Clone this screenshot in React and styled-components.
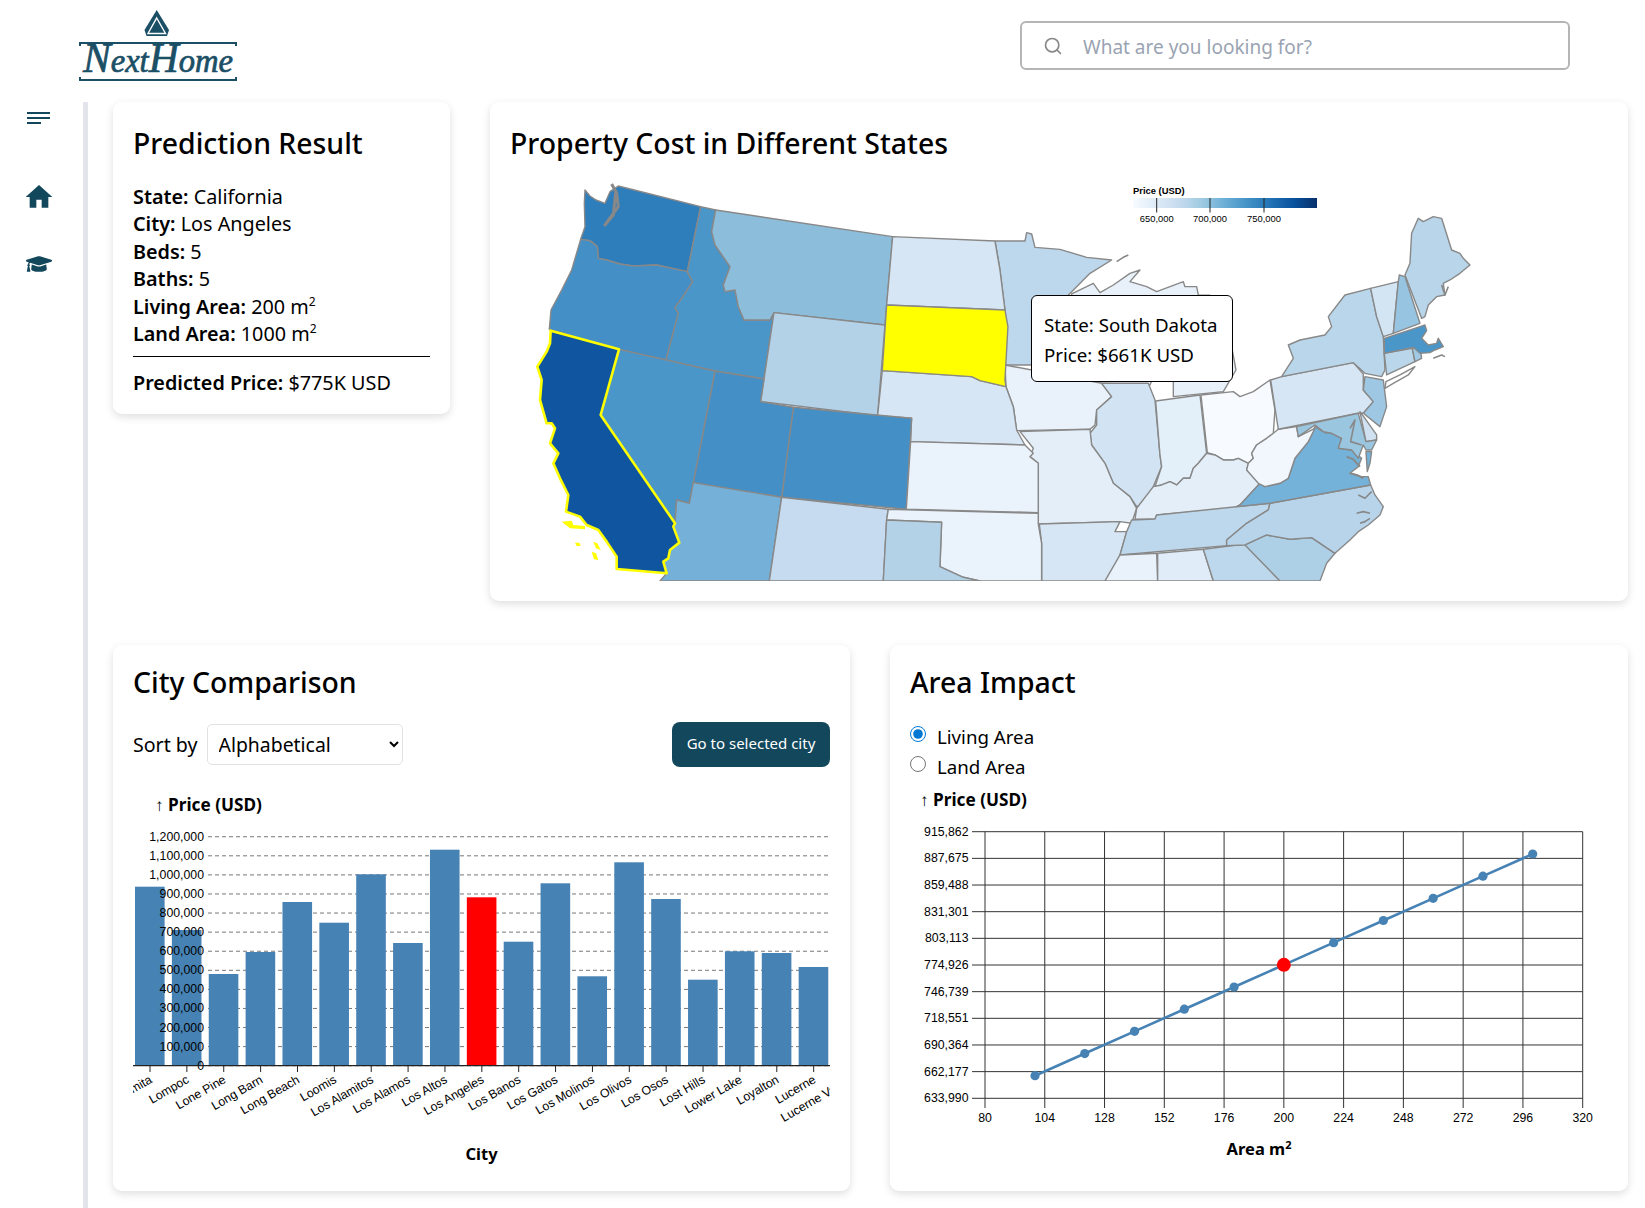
import React from "react";
import styled, { createGlobalStyle } from "styled-components";
import { MdHome } from "react-icons/md";
import { FaGraduationCap } from "react-icons/fa";
import { FiSearch } from "react-icons/fi";

const GlobalStyle = createGlobalStyle`
  html, body {
    margin: 0;
    padding: 0;
    background: #fff;
    color: #000;
    font-family: "Noto Sans", "Open Sans", sans-serif;
  }
`;

const Page = styled.div`
  width: 1645px;
  height: 1208px;
  overflow: hidden;
  display: flex;
  flex-direction: column;
`;

const Header = styled.header`
  height: 102px;
  box-sizing: border-box;
  padding: 10px 75px 0 78px;
  display: flex;
  justify-content: space-between;
  align-items: flex-start;
`;

const SearchBox = styled.div`
  width: 550px;
  height: 49px;
  margin-top: 11px;
  box-sizing: border-box;
  border: 2px solid #b5b5b5;
  border-radius: 6px;
  display: flex;
  align-items: center;
  padding-left: 21px;
  gap: 20px;
  color: #888;
`;

const SearchInput = styled.input`
  flex: 1;
  border: none;
  outline: none;
  background: transparent;
  padding: 2px 0 0;
  font-family: inherit;
  font-size: 19px;
  &::placeholder {
    color: #9aa3b2;
    opacity: 1;
  }
`;

const Main = styled.div`
  flex: 1;
  display: flex;
  min-height: 0;
`;

const Sidebar = styled.nav`
  width: 88px;
  box-sizing: border-box;
  border-right: 5px solid #e4e4ec;
  padding: 10px 6px 0 0;
  display: flex;
  flex-direction: column;
  align-items: center;
  color: #12475c;
`;

const NavIcon = styled.div`
  display: flex;
  margin-top: ${({ $top }) => $top}px;
`;

const Content = styled.main`
  flex: 1;
  padding: 0 17px 0 25px;
  display: flex;
  flex-direction: column;
  gap: 44px;
`;

const Row = styled.div`
  display: flex;
  gap: 40px;
  align-items: flex-start;
`;

const Card = styled.section`
  box-sizing: border-box;
  width: ${({ $width }) => $width}px;
  padding: ${({ $top }) => $top}px 20px ${({ $bottom }) => $bottom}px;
  background: #fff;
  border-radius: 9px;
  box-shadow: 0 3px 9px rgba(0, 0, 0, 0.13);
`;

const Title = styled.h2`
  margin: 0 0 ${({ $gap }) => $gap}px;
  font-size: 28.4px;
  line-height: 38px;
  font-weight: 500;
`;

const Fact = styled.div`
  font-size: 19.8px;
  line-height: 27.4px;
  sup {
    font-size: 12px;
    line-height: 0;
  }
  b {
    font-weight: 600;
  }
`;

const Rule = styled.hr`
  margin: 9px 0 12px;
  border: none;
  border-top: 1px solid #000;
`;

const MapFrame = styled.div`
  position: relative;
  margin: 0 -20px;
  height: 411px;
`;

const Tooltip = styled.div`
  position: absolute;
  left: 541px;
  top: 125px;
  width: 202px;
  height: 87px;
  box-sizing: border-box;
  padding: 14px 12px;
  background: #fff;
  border: 1px solid #000;
  border-radius: 6px;
  font-size: 18.7px;
  line-height: 29.5px;
  white-space: nowrap;
`;

const Controls = styled.div`
  height: 45px;
  margin-top: 21px;
  display: flex;
  align-items: center;
  justify-content: space-between;
`;

const SortGroup = styled.label`
  display: flex;
  align-items: center;
  gap: 9px;
  font-size: 19.6px;
`;

const SortSelect = styled.select`
  width: 196px;
  height: 41px;
  padding-left: 7px;
  background: #fff;
  border: 1px solid #e2e2e2;
  border-radius: 5px;
  font-family: inherit;
  font-size: 19.4px;
  color: #000;
`;

const GoButton = styled.button`
  width: 158px;
  height: 45px;
  padding: 0 0 3px;
  border: none;
  border-radius: 8px;
  background: #12475c;
  color: #fff;
  font-family: inherit;
  font-size: 15px;
`;

const ChartSvg = styled.svg`
  display: block;
`;

const RadioList = styled.div`
  margin-top: 20px;
  display: flex;
  flex-direction: column;
`;

const RadioLabel = styled.label`
  height: 30px;
  display: flex;
  align-items: center;
  gap: 10px;
  font-size: 18.7px;
`;

const Radio = styled.input`
  width: 16px;
  height: 16px;
  margin: 0 1px 4px 0;
  accent-color: #0078d4;
`;

const Land = styled.polygon`
  stroke: ${({ $edge }) => $edge || "#888"};
  stroke-width: ${({ $edge }) => ($edge ? 2.6 : 1.4)}px;
  stroke-linejoin: round;
  vector-effect: non-scaling-stroke;
`;

const Shoreline = styled.polyline`
  fill: none;
  stroke: #888;
  stroke-width: ${({ $weight }) => $weight || 1.4}px;
  stroke-linejoin: round;
  vector-effect: non-scaling-stroke;
`;

const AxisText = styled.text`
  font-family: "Liberation Sans", Arial, sans-serif;
  font-size: 12.3px;
  fill: #000;
`;

const LegendText = styled.text`
  font-family: "Liberation Sans", Arial, sans-serif;
  font-size: 9.4px;
  font-weight: ${({ $bold }) => ($bold ? 700 : 400)};
  fill: #000;
`;

const AxisTitle = styled.text`
  font-family: "Noto Sans", sans-serif;
  font-size: ${({ $size }) => $size}px;
  font-weight: 700;
  fill: #000;
`;

const westStates = [
  ["#2e7ebc", "285,60 300,78 318,90 345,100 360,65 385,48 632,110 592,305 500,285 430,288 390,282 350,270 325,265 322,230 300,212 272,208 285,170 283,100"],
  ["#4490c6", "272,208 300,212 322,230 325,265 350,270 390,282 430,288 500,285 592,305 608,335 575,385 555,412 565,430 528,570 387,538 178,478 183,420 215,360 245,300"],
  ["#4a96c9", "632,110 677,120 665,185 675,225 720,290 700,345 705,365 735,360 745,410 762,450 840,450 852,428 822,627 675,603 528,570 565,430 555,412 575,385 608,335 592,305"],
  ["#8cbddb", "677,120 1208,200 1185,465 852,428 840,450 762,450 745,410 735,360 705,365 700,345 720,290 675,225 665,185"],
  ["#b3d2e8", "852,428 1185,465 1163,737 812,695"],
  ["#d6e6f4", "1208,200 1515,213 1530,300 1545,420 1190,405"],
  ["#d7e6f4", "1177,602 1445,620 1470,632 1548,650 1570,710 1580,780 1605,825 1262,815 1265,745 1163,737"],
  ["#4490c6", "910,712 1265,745 1249,1018 875,982"],
  ["#4490c6", "675,603 822,627 812,695 910,712 875,982 610,938"],
  ["#4a96c9", "387,538 675,603 610,938 598,1000 560,990 555,1060 332,735"],
  ["#74b0d7", "610,938 875,982 838,1233 510,1233 530,1210 520,1175 535,1165 540,1140 568,1118 550,1070 555,1060 560,990 598,1000"],
  ["#c6dbef", "875,982 1195,1018 1190,1050 1180,1233 838,1233"],
  ["#eaf2fb", "1262,815 1605,825 1630,850 1620,860 1645,880 1645,1028 1249,1018"],
  ["#eaf2fb", "1195,1018 1645,1030 1645,1062 1655,1120 1655,1233 1470,1233 1420,1222 1350,1190 1355,1057 1190,1050"],
  ["#b3d2e8", "1190,1050 1355,1057 1350,1190 1420,1222 1470,1233 1180,1233"],
];

const southDakota = "1190,405 1545,420 1554,470 1545,630 1548,650 1470,632 1445,620 1177,602";

const california = "182,482 387,538 332,735 555,1060 550,1070 568,1118 540,1140 535,1165 520,1175 530,1210 380,1197 380,1160 350,1115 325,1080 290,1065 270,1040 228,1025 235,975 210,925 190,880 205,850 180,820 195,775 185,760 170,760 150,690 155,630 142,590 170,545 180,520";

const channelIslands = [
  "215,1055 245,1052 250,1065 285,1068 285,1078 240,1075",
  "255,1118 268,1118 272,1128 260,1128",
  "310,1115 322,1120 332,1140 318,1135",
  "305,1145 318,1150 325,1170 312,1168",
];

const eastStates = [
  ["#e8f1fa", "155,420 600,420 510,645 365,640 155,585"],
  ["#bdd7ec", "45,213 135,213 140,188 155,192 165,232 240,238 320,262 395,270 330,310 275,365 260,380 155,450 155,585 75,585 78,470 75,420 60,300"],
  ["#e8f1fa", "275,372 340,340 360,368 400,345 450,310 480,300 450,335 500,350 530,365 610,335 615,350 650,350 655,375 690,376 690,420 275,420"],
  ["#e8f1fa", "580,680 730,665 768,600 755,530 580,530"],
  ["#e9f2fb", "75,585 365,640 395,680 350,720 345,765 330,778 110,782 100,710 78,650"],
  ["#d2e4f3", "365,640 505,640 525,690 540,855 545,890 520,950 495,1000 470,1010 450,980 400,940 375,880 335,825 330,790 350,765 350,720 395,680"],
  ["#e3eff9", "527,693 660,675 680,850 655,880 640,895 630,925 610,925 590,945 570,935 545,945 525,950 545,890 540,855"],
  ["#f7fbff", "663,675 760,665 780,680 820,665 870,630 885,720 880,790 860,805 830,825 815,850 820,865 805,880 775,865 760,870 730,870 705,855 682,848"],
  ["#e3eef9", "120,785 330,778 335,825 375,880 400,940 450,980 470,1015 455,1060 420,1055 175,1062 175,880 150,860 160,835"],
  ["#d7e6f5", "178,1062 420,1055 405,1085 440,1085 420,1155 385,1233 185,1233 185,1120"],
  ["#e3eef9", "470,1015 520,950 545,945 570,935 590,945 610,925 630,925 640,895 655,880 680,850 705,855 730,870 760,870 775,865 805,880 800,900 840,940 780,1005 760,1015 530,1035 525,1047 465,1048"],
  ["#bdd7ec", "455,1050 525,1047 530,1035 870,1000 865,1020 800,1060 740,1110 740,1127 420,1155 440,1085"],
  ["#e9f2fb", "420,1155 530,1150 533,1233 375,1233"],
  ["#e0ecf8", "533,1150 670,1138 700,1233 533,1233"],
  ["#bdd7ec", "670,1138 795,1122 900,1233 700,1233"],
  ["#add0e6", "795,1125 860,1095 930,1108 995,1103 1065,1150 1040,1180 1020,1233 900,1233"],
  ["#b7d4ea", "870,1000 1172,945 1185,975 1210,1010 1200,1035 1165,1065 1135,1085 1110,1110 1065,1150 995,1103 930,1108 860,1095 795,1125 740,1127 740,1110 800,1060 865,1020"],
  ["#74b2d9", "780,1005 840,940 855,950 900,940 925,925 945,865 985,815 1005,770 1030,785 1055,790 1085,805 1075,835 1115,840 1145,865 1135,890 1110,910 1145,920 1165,920 1172,945 870,1000 770,1010"],
  ["#74b2d9", "1158,845 1175,845 1170,880 1162,905"],
  ["#f2f7fd", "805,880 820,865 815,850 830,825 860,805 880,790 895,778 950,770 955,800 1005,775 985,815 945,865 925,925 900,940 855,950 835,940 800,900"],
  ["#ffffff", "1005,765 1035,775 1040,790 1015,775"],
  ["#d6e6f4", "872,630 905,620 1120,578 1150,612 1150,660 1180,695 1150,730 1135,730 895,778"],
  ["#bad6eb", "905,620 940,565 925,525 960,510 1035,495 1055,470 1045,440 1095,375 1172,355 1190,440 1210,500 1215,600 1205,620 1155,610 1120,578"],
  ["#d3e4f3", "1172,355 1255,335 1240,490 1210,500 1190,440"],
  ["#96c4e1", "1258,315 1275,320 1320,460 1240,490 1255,335"],
  ["#b9d5ea", "1275,315 1290,280 1295,190 1315,145 1330,155 1360,140 1385,145 1415,240 1440,250 1450,265 1470,285 1440,310 1410,330 1390,340 1395,375 1370,380 1345,405 1335,440 1325,445"],
  ["#bad6eb", "1213,550 1297,535 1305,575 1220,615"],
  ["#9fc9e4", "1297,535 1320,530 1325,565 1305,575"],
  ["#4a96c9", "1213,505 1320,470 1335,465 1340,482 1325,505 1345,525 1370,520 1375,505 1390,530 1365,540 1350,548 1320,550 1300,532 1213,550"],
  ["#ffffff", "1218,635 1260,615 1305,590 1285,615 1240,640 1215,655"],
  ["#9dc7e2", "1155,620 1210,630 1220,710 1200,770 1150,730 1180,695 1150,660"],
  ["#d0e2f2", "1140,725 1155,745 1190,795 1190,810 1158,815"],
  ["#9ac6e0", "950,770 1135,730 1158,815 1190,810 1175,840 1158,840 1150,825 1135,865 1115,840 1075,835 1085,805 1055,790 1030,785 1005,765 955,800"],
];

const shorelines = [
  ["1110,775 1125,750 1112,815 1145,825", 1.6],
  ["1100,860 1120,868 1140,890", 2],
  ["1110,910 1130,915 1150,925", 2],
  ["1135,975 1155,985 1175,965", 1.6],
  ["1130,1030 1150,1025 1170,1030", 1.6],
  ["1140,1060 1155,1055 1170,1045", 1.6],
  ["410,275 430,262 445,255", 1.6],
  ["1385,345 1395,375 1405,350", 1.6],
  ["1360,565 1385,555 1395,560", 1.6],
];

const MapDrawing = () => (
  <ChartSvg width="1138" height="411" viewBox="490 170 1138 411">
    <defs>
      <linearGradient id="blues">
        {["#f7fbff", "#deebf7", "#c6dbef", "#9ecae1", "#6baed6", "#4292c6", "#2171b5", "#08519c", "#08306b"].map((c, i) => (
          <stop key={c} offset={`${i * 12.5}%`} stopColor={c} />
        ))}
      </linearGradient>
    </defs>
    <g transform="translate(980 170) scale(0.3333)">
      {eastStates.map(([fill, points]) => (
        <Land key={points} points={points} fill={fill} />
      ))}
      {shorelines.map(([points, weight]) => (
        <Shoreline key={points} points={points} $weight={weight} />
      ))}
    </g>
    <g transform="translate(490 170) scale(0.3333)">
      {westStates.map(([fill, points]) => (
        <Land key={points} points={points} fill={fill} />
      ))}
      <Land points={southDakota} fill="#ffff00" />
      <Shoreline points="365,42 380,70 385,110 345,165 370,135 378,60" $weight={3} />
      <Land points={california} fill="#10559f" $edge="#ffff00" />
      {channelIslands.map((points) => (
        <polygon key={points} points={points} fill="#ffff00" />
      ))}
    </g>
    <LegendText x="1133" y="193.5" $bold>Price (USD)</LegendText>
    <rect x="1133" y="198" width="184" height="10" fill="url(#blues)" />
    {[[1156.7, "650,000"], [1210, "700,000"], [1264, "750,000"]].map(([x, label]) => (
      <g key={label}>
        <line x1={x} x2={x} y1="198" y2="212.5" stroke="#222" />
        <LegendText x={x} y="221.5" textAnchor="middle">{label}</LegendText>
      </g>
    ))}
  </ChartSvg>
);

const cityBars = [
  ["Lomita", 886.7], ["Lompoc", 930], ["Lone Pine", 974], ["Long Barn", 952], ["Long Beach", 902],
  ["Loomis", 922.7], ["Los Alamitos", 874.3], ["Los Alamos", 943], ["Los Altos", 849.7], ["Los Angeles", 897.3],
  ["Los Banos", 941.7], ["Los Gatos", 883.3], ["Los Molinos", 976.3], ["Los Olivos", 862.3], ["Los Osos", 899],
  ["Lost Hills", 979.7], ["Lower Lake", 951.3], ["Loyalton", 953], ["Lucerne", 967],
];

const priceTicks = [...Array(13).keys()].map((i) => i * 100000);

const CityChart = () => (
  <ChartSvg width="697" height="415" viewBox="133 767 697 415">
    <AxisTitle x="155" y="811" $size={17.2}>↑ Price (USD)</AxisTitle>
    {priceTicks.map((price, i) => (
      <line key={price} x1="208" x2="828" y1={1065.7 - i * 19.08} y2={1065.7 - i * 19.08} stroke="#777" strokeDasharray="4 3" />
    ))}
    {cityBars.map(([city, top], i) => (
      <rect
        key={city}
        x={135 + i * 36.87}
        y={top}
        width="29.6"
        height={1065.7 - top}
        fill={city === "Los Angeles" ? "#ff0000" : "#4682b4"}
      />
    ))}
    {priceTicks.map((price, i) => (
      <AxisText key={price} x="204" y={1069.7 - i * 19.08} textAnchor="end">
        {price.toLocaleString("en-US")}
      </AxisText>
    ))}
    <line x1="133" x2="830" y1="1065.7" y2="1065.7" stroke="#222" strokeWidth="1.3" />
    {[...cityBars.map(([city]) => city), "Lucerne Valley"].map((city, i) => {
      const x = 150 + i * 36.87;
      return (
        <g key={city}>
          <line x1={x} x2={x} y1="1066" y2="1072" stroke="#222" />
          <AxisText x={x + 3} y="1082" textAnchor="end" transform={`rotate(-30 ${x + 3} 1082)`}>{city}</AxisText>
        </g>
      );
    })}
    <AxisTitle x="481.5" y="1160" textAnchor="middle" $size={16.5}>City</AxisTitle>
  </ChartSvg>
);

const priceLabels = ["915,862", "887,675", "859,488", "831,301", "803,113", "774,926", "746,739", "718,551", "690,364", "662,177", "633,990"];
const areaLabels = [80, 104, 128, 152, 176, 200, 224, 248, 272, 296, 320];
const samples = [...Array(11).keys()].map((i) => ({ area: 100 + i * 20, x: 1035 + i * 49.77, y: 1075.7 - i * 22.17 }));

const AreaChart = () => (
  <ChartSvg width="698" height="400" viewBox="910 781 698 400">
    <AxisTitle x="920" y="806" $size={17.2}>↑ Price (USD)</AxisTitle>
    {priceLabels.map((label, i) => {
      const y = 831.7 + i * 26.66;
      return (
        <g key={label}>
          <line x1="972" x2="1582.7" y1={y} y2={y} stroke="#333" />
          <AxisText x="968.5" y={y + 4} textAnchor="end">{label}</AxisText>
        </g>
      );
    })}
    {areaLabels.map((label, i) => {
      const x = 985 + i * 59.77;
      return (
        <g key={label}>
          <line x1={x} x2={x} y1="831.7" y2="1108" stroke="#333" />
          <AxisText x={x} y="1122" textAnchor="middle">{label}</AxisText>
        </g>
      );
    })}
    <polyline
      points={samples.map((p) => `${p.x},${p.y}`).join(" ")}
      fill="none"
      stroke="#4682b4"
      strokeWidth="2.6"
    />
    {samples.map((p) => (
      <circle key={p.area} cx={p.x} cy={p.y} r={p.area === 200 ? 7 : 4.6} fill={p.area === 200 ? "#ff0000" : "#4682b4"} />
    ))}
    <AxisTitle x="1259" y="1155" textAnchor="middle" $size={16.5}>
      Area m<tspan dy="-6" fontSize="11">2</tspan>
    </AxisTitle>
  </ChartSvg>
);

const Logo = () => (
  <svg width="160" height="74" viewBox="78 10 160 74">
    <path d="M156.7 10 L169 30 L167 36 L146.5 36 L144.5 30 Z" fill="#1b4f66" />
    <path d="M156.7 18 L165.5 33.5 L148 33.5 Z" fill="none" stroke="#fff" strokeWidth="1.4" />
    <path d="M156.7 24 L162 32 L151.5 32 Z" fill="#1b4f66" />
    <g fill="none" stroke="#1b4f66" strokeWidth="2">
      <path d="M80 46 V43 H236 V46" />
      <path d="M80 77 V80 H236 V77" />
    </g>
    <text
      x="83"
      y="72"
      textLength="150"
      lengthAdjust="spacingAndGlyphs"
      fontFamily="'Liberation Serif', serif"
      fontStyle="italic"
      fontSize="33"
      stroke="#1b4f66"
      strokeWidth="0.7"
      fill="#1b4f66"
    >
      <tspan fontSize="42">N</tspan>ext<tspan fontSize="42">H</tspan>ome
    </text>
  </svg>
);

const MenuIcon = () => (
  <svg width="23" height="14" viewBox="0 0 23 14">
    <rect width="23" height="2" fill="#12475c" />
    <rect y="5" width="23" height="2" fill="#12475c" />
    <rect y="10" width="14" height="2" fill="#12475c" />
  </svg>
);

const App = () => (
  <Page>
    <GlobalStyle />
    <Header>
      <Logo />
      <SearchBox>
        <FiSearch size={20} />
        <SearchInput placeholder="What are you looking for?" />
      </SearchBox>
    </Header>
    <Main>
      <Sidebar>
        <NavIcon $top={0}><MenuIcon /></NavIcon>
        <NavIcon $top={55}><MdHome size={32} /></NavIcon>
        <NavIcon $top={38}><FaGraduationCap size={26} /></NavIcon>
      </Sidebar>
      <Content>
        <Row>
          <Card $width={337} $top={22} $bottom={17}>
            <Title $gap={21}>Prediction Result</Title>
            <Fact><b>State:</b> California</Fact>
            <Fact><b>City:</b> Los Angeles</Fact>
            <Fact><b>Beds:</b> 5</Fact>
            <Fact><b>Baths:</b> 5</Fact>
            <Fact><b>Living Area:</b> 200 m<sup>2</sup></Fact>
            <Fact><b>Land Area:</b> 1000 m<sup>2</sup></Fact>
            <Rule />
            <Fact><b>Predicted Price:</b> $775K USD</Fact>
          </Card>
          <Card $width={1138} $top={22} $bottom={20}>
            <Title $gap={8}>Property Cost in Different States</Title>
            <MapFrame>
              <MapDrawing />
              <Tooltip>
                State: South Dakota<br />
                Price: $661K USD
              </Tooltip>
            </MapFrame>
          </Card>
        </Row>
        <Row>
          <Card $width={737} $top={18} $bottom={9}>
            <Title $gap={0}>City Comparison</Title>
            <Controls>
              <SortGroup>
                Sort by
                <SortSelect defaultValue="alpha">
                  <option value="alpha">Alphabetical</option>
                  <option value="price">Price</option>
                </SortSelect>
              </SortGroup>
              <GoButton>Go to selected city</GoButton>
            </Controls>
            <CityChart />
          </Card>
          <Card $width={738} $top={18} $bottom={10}>
            <Title $gap={0}>Area Impact</Title>
            <RadioList>
              <RadioLabel><Radio type="radio" name="area" defaultChecked /> Living Area</RadioLabel>
              <RadioLabel><Radio type="radio" name="area" /> Land Area</RadioLabel>
            </RadioList>
            <AreaChart />
          </Card>
        </Row>
      </Content>
    </Main>
  </Page>
);

export default App;
